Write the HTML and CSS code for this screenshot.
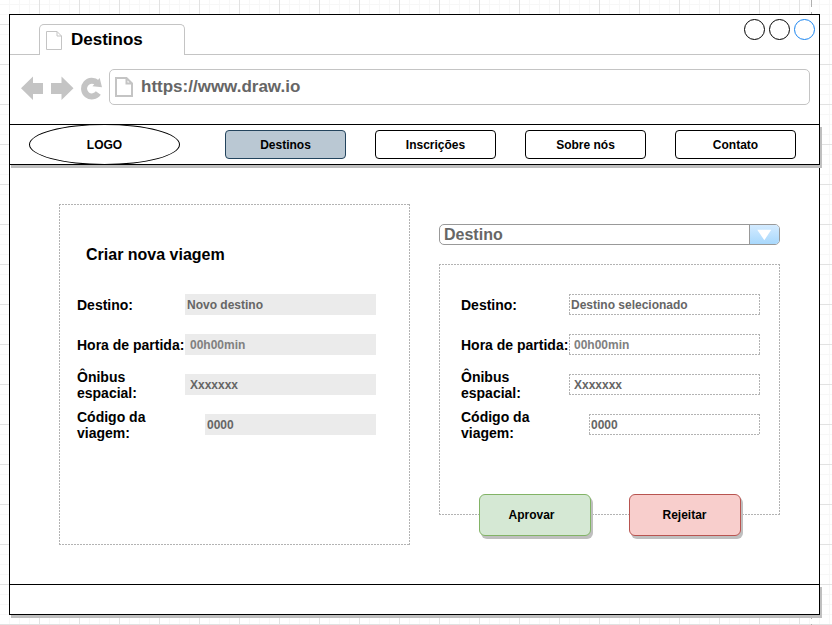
FILE: index.html
```html
<!DOCTYPE html>
<html lang="pt-BR">
<head>
<meta charset="utf-8">
<title>Destinos</title>
<link rel="stylesheet" href="styles.css">
</head>
<body>
<div class="window">
  <header class="titlebar">
    <div class="tab">
      <svg class="tab-icon" width="18" height="21" viewBox="0 0 18 21" aria-hidden="true"><path d="M1.500 1.500H12L16.500 6V19.500H1.500ZM12 1.500V6H16.500" /></svg>
      <span>Destinos</span>
    </div>
    <div class="controls">
      <button class="dot" aria-label="Minimizar"></button>
      <button class="dot" aria-label="Maximizar"></button>
      <button class="dot dot-close" aria-label="Fechar"></button>
    </div>
  </header>
  <div class="toolbar">
    <button class="tool" aria-label="Voltar"><svg width="23" height="26" viewBox="0 0 23 26"><path d="M0 14.300L12 2.500V9H22V20H12V26Z"/></svg></button>
    <button class="tool" aria-label="Avançar"><svg width="23" height="26" viewBox="0 0 23 26"><path d="M22.500 14.300L10.500 2.500V9H0V20H10.500V26Z"/></svg></button>
    <button class="tool" aria-label="Recarregar"><svg width="21" height="26" viewBox="0 0 21 26"><path class="ring" d="M17.300 19A7.800 7.800 0 1 1 16.300 9"/><path d="M18.700 4L21 13.300L11.500 12.200Z"/></svg></button>
    <label class="address">
      <svg width="20" height="22" viewBox="0 0 20 22" aria-hidden="true"><path d="M2 2H12.500L18 7.500V20H2ZM12.500 2V7.500H18"/></svg>
      <input type="text" value="https://www.draw.io" aria-label="Endereço">
    </label>
  </div>
  <nav class="nav">
    <a class="logo" href="#">LOGO</a>
    <div class="links">
      <a class="link active" href="#">Destinos</a>
      <a class="link" href="#">Inscrições</a>
      <a class="link" href="#">Sobre nós</a>
      <a class="link" href="#">Contato</a>
    </div>
  </nav>
  <main class="main">
    <form class="panel create">
      <h1>Criar nova viagem</h1>
      <div class="rows filled">
        <div class="row"><label for="n-dest">Destino:</label><input id="n-dest" value="Novo destino"></div>
        <div class="row"><label for="n-hora">Hora de partida:</label><input class="indent light" id="n-hora" value="00h00min"></div>
        <div class="row"><label for="n-bus">Ônibus espacial:</label><input class="indent" id="n-bus" value="Xxxxxxx"></div>
        <div class="row"><label for="n-cod">Código da viagem:</label><input class="short" id="n-cod" value="0000"></div>
      </div>
    </form>
    <form class="review">
      <div class="picker">
        <select aria-label="Destino"><option>Destino</option></select>
        <svg class="arrow" width="30" height="19" viewBox="0 0 30 19" aria-hidden="true"><path d="M7.500 4.500H22L14.800 15.500Z"/></svg>
      </div>
      <div class="panel details">
        <div class="rows">
          <div class="row"><label for="s-dest">Destino:</label><input id="s-dest" value="Destino selecionado"></div>
          <div class="row"><label for="s-hora">Hora de partida:</label><input class="indent light" id="s-hora" value="00h00min"></div>
          <div class="row"><label for="s-bus">Ônibus espacial:</label><input class="indent" id="s-bus" value="Xxxxxxx"></div>
          <div class="row"><label for="s-cod">Código da viagem:</label><input class="short" id="s-cod" value="0000"></div>
        </div>
      </div>
      <div class="actions">
        <button type="button" class="approve">Aprovar</button>
        <button type="button" class="reject">Rejeitar</button>
      </div>
    </form>
  </main>
  <footer class="footer"></footer>
</div>
</body>
</html>
```
FILE: styles.css
```css
* { box-sizing: border-box; }

html {
  min-height: 100%;
  background-color: #fff;
  background-image:
    repeating-linear-gradient(#b0b0b0 0 7px, transparent 7px 12px),
    linear-gradient(90deg, #e2e2e2 1px, transparent 1px),
    linear-gradient(#e2e2e2 1px, transparent 1px),
    linear-gradient(90deg, #f7f7f7 1px, transparent 1px),
    linear-gradient(#f7f7f7 1px, transparent 1px);
  background-size: 1px 100%, 40px 40px, 40px 40px, 10px 10px, 10px 10px;
  background-position: right 20px top 0, 39px 24px, 39px 24px, 9px 4px, 9px 4px;
  background-repeat: no-repeat, repeat, repeat, repeat, repeat;
}

body {
  margin: 0;
  padding: 14px 12px 10px 9px;
  font: bold 12px/16px "Liberation Sans", Arial, sans-serif;
  color: #000;
}

button, input, select { font: inherit; color: inherit; margin: 0; padding: 0; }
a { color: inherit; text-decoration: none; }

.window { background: #fff; border: 1px solid #000; border-bottom: 0; }

/* Browser chrome */
.titlebar { display: flex; align-items: flex-end; height: 40px; }
.titlebar::before { content: ""; width: 29px; border-bottom: 1px solid #c4c4c4; }
.tab {
  display: flex;
  align-items: center;
  gap: 8px;
  width: 146px;
  height: 31px;
  padding-left: 5px;
  border: 1px solid #c4c4c4;
  border-bottom: 0;
  border-radius: 5px 5px 0 0;
  font-size: 17px;
}
.tab-icon { fill: none; stroke: #c4c4c4; }
.controls {
  flex: 1;
  align-self: stretch;
  display: flex;
  justify-content: flex-end;
  gap: 4px;
  padding: 4px 4px 0 0;
  border-bottom: 1px solid #c4c4c4;
}
.dot { width: 21px; height: 21px; border: 1px solid #000; border-radius: 50%; background: none; }
.dot-close { border-color: #1a85f0; }

.toolbar { display: flex; align-items: center; gap: 7px; padding: 14px 9px 19px 11px; }
.tool { display: flex; border: 0; background: none; fill: #c4c4c4; }
.ring { fill: none; stroke: #c4c4c4; stroke-width: 6; }
.address {
  flex: 1;
  display: flex;
  align-items: center;
  gap: 7px;
  height: 36px;
  padding-left: 4px;
  border: 1px solid #c4c4c4;
  border-radius: 5px;
  font-size: 17px;
}
.address svg { fill: none; stroke: #c4c4c4; stroke-width: 2; }
.address input { flex: 1; min-width: 0; border: 0; outline: 0; background: none; color: #666; }

/* Site navigation */
.nav {
  display: flex;
  align-items: center;
  gap: 45px;
  height: 41px;
  margin: 0 -1px;
  padding: 0 23px 0 19px;
  border: 1px solid #000;
  background: #fff;
  box-shadow: 2px 3px 0 #bfbfbf;
}
.logo {
  display: grid;
  place-items: center;
  width: 151px;
  height: 41px;
  border: 1px solid #000;
  border-radius: 50%;
}
.links { flex: 1; display: flex; gap: 29px; }
.link {
  flex: 1;
  display: grid;
  place-items: center;
  height: 29px;
  border: 1px solid #000;
  border-radius: 4px;
}
.active { background: #bac8d3; border-color: #23445d; }

/* Content */
.main { display: grid; grid-template-columns: 351fr 341fr; gap: 29px; padding: 39px 39px 39px 49px; }

.panel, .rows:not(.filled) input {
  --h: repeating-linear-gradient(90deg, #b3b3b3 0 2px, transparent 2px 3px);
  --v: repeating-linear-gradient(#b3b3b3 0 2px, transparent 2px 3px);
  background:
    var(--h) top / 100% 1px no-repeat,
    var(--h) bottom / 100% 1px no-repeat,
    var(--v) left / 1px 100% no-repeat,
    var(--v) right / 1px 100% no-repeat;
}
.create { padding: 30px 34px 30px 18px; }
h1 { margin: 0 0 18px; padding-left: 9px; font-size: 16px; line-height: 42px; }

.rows { display: grid; gap: 19px; }
.row { display: flex; align-items: center; height: 21px; }
.row label { flex: none; width: 108px; font-size: 14px; }
.row input {
  flex: 1;
  min-width: 0;
  height: 21px;
  padding-left: 2px;
  border: 0;
  border-radius: 0;
  color: #666;
}
.filled input { background: #ebebeb; }
.row .indent { padding-left: 5px; }
.row .light { color: #808080; }
.row .short { margin-left: 20px; }

.review { padding: 20px 0 9px; }
.picker { position: relative; margin-bottom: 19px; }
.picker select {
  display: block;
  appearance: none;
  width: 100%;
  height: 21px;
  padding-left: 4px;
  border: 1px solid #999;
  border-radius: 5px;
  background: #fff;
  color: #666;
  font-size: 16px;
  line-height: 19px;
}
.arrow {
  position: absolute;
  top: 1px;
  right: 1px;
  border-left: 1px solid #999;
  border-radius: 0 4px 4px 0;
  background: linear-gradient(#d4ebff, #a8d8fc);
  fill: #fff;
  pointer-events: none;
}
.details { padding: 30px 20px 80px 22px; }

.actions { display: flex; justify-content: center; gap: 38px; margin-top: -21px; }
.actions button {
  width: 112px;
  height: 42px;
  border: 1px solid;
  border-radius: 6px;
  box-shadow: 2px 3px 0 #bfbfbf;
}
.actions .approve { padding-right: 6px; background: #d5e8d4; border-color: #82b366; }
.actions .reject { background: #f8cecc; border-color: #b85450; }

.footer {
  height: 31px;
  margin: 0 -1px;
  border: 1px solid #000;
  background: #fff;
  box-shadow: 2px 3px 0 #bfbfbf;
}
```
